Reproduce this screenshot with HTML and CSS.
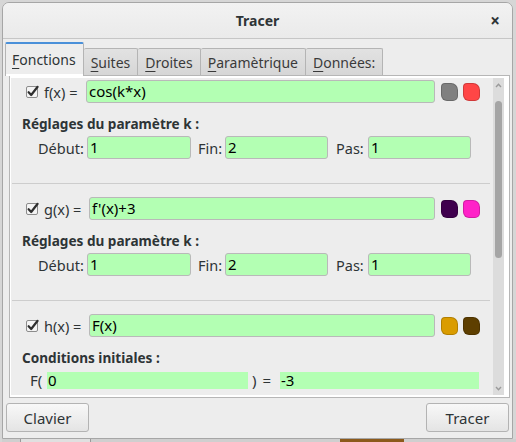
FILE: index.html
```html
<!DOCTYPE html>
<html lang="fr">
<head>
<meta charset="utf-8">
<title>Tracer</title>
<link rel="stylesheet" href="styles.css">
</head>
<body>
<div class="window">
  <div class="titlebar">
    <span></span>
    <span class="title">Tracer</span>
    <span class="close">×</span>
  </div>
  <div class="notebook">
    <div class="tabs">
      <div class="tab active"><u>F</u>onctions</div>
      <div class="tab"><u>S</u>uites</div>
      <div class="tab"><u>D</u>roites</div>
      <div class="tab"><u>P</u>aramètrique</div>
      <div class="tab"><u>D</u>onnées:</div>
    </div>
    <div class="page">
      <div class="viewport">
        <div class="list">
          <div class="rows">
            <div class="item">
              <div class="fline">
                <svg class="check" width="14" height="14" viewBox="0 0 14 14"><rect x="0.5" y="1.5" width="11" height="11" rx="1.5" fill="#f4f4f4" stroke="#8c8c8c"/><path d="M2.6 7.2 L5.2 10 L11.6 1.8" fill="none" stroke="#2e2e2e" stroke-width="2.2" stroke-linecap="round" stroke-linejoin="round"/></svg>
                <span class="fname narrow">f(x) =</span>
                <span class="entry grow">cos(k*x)</span>
                <span class="swatch" style="background:#808080"></span>
                <span class="swatch" style="background:#ff4646"></span>
              </div>
              <div class="section">Réglages du paramètre k :</div>
              <div class="params">
                <span class="plabel">Début:</span><span class="entry">1</span>
                <span class="plabel">Fin:</span><span class="entry">2</span>
                <span class="plabel">Pas:</span><span class="entry">1</span>
              </div>
            </div>
            <div class="sep"></div>
            <div class="item">
              <div class="fline">
                <svg class="check" width="14" height="14" viewBox="0 0 14 14"><rect x="0.5" y="1.5" width="11" height="11" rx="1.5" fill="#f4f4f4" stroke="#8c8c8c"/><path d="M2.6 7.2 L5.2 10 L11.6 1.8" fill="none" stroke="#2e2e2e" stroke-width="2.2" stroke-linecap="round" stroke-linejoin="round"/></svg>
                <span class="fname">g(x) =</span>
                <span class="entry grow">f'(x)+3</span>
                <span class="swatch" style="background:#40004e"></span>
                <span class="swatch" style="background:#ff22c8"></span>
              </div>
              <div class="section">Réglages du paramètre k :</div>
              <div class="params">
                <span class="plabel">Début:</span><span class="entry">1</span>
                <span class="plabel">Fin:</span><span class="entry">2</span>
                <span class="plabel">Pas:</span><span class="entry">1</span>
              </div>
            </div>
            <div class="sep"></div>
            <div class="item">
              <div class="fline">
                <svg class="check" width="14" height="14" viewBox="0 0 14 14"><rect x="0.5" y="1.5" width="11" height="11" rx="1.5" fill="#f4f4f4" stroke="#8c8c8c"/><path d="M2.6 7.2 L5.2 10 L11.6 1.8" fill="none" stroke="#2e2e2e" stroke-width="2.2" stroke-linecap="round" stroke-linejoin="round"/></svg>
                <span class="fname">h(x) =</span>
                <span class="entry grow">F(x)</span>
                <span class="swatch" style="background:#da9c00"></span>
                <span class="swatch" style="background:#5e3f00"></span>
              </div>
              <div class="section">Conditions initiales :</div>
              <div class="cond">
                <span class="clabel">F(</span>
                <span class="flat">0</span>
                <span class="cmid"><span>)</span><span class="eq">=</span></span>
                <span class="flat">-3</span>
              </div>
            </div>
          </div>
        </div>
        <div class="scrollbar">
          <svg class="arrow up" width="7" height="5" viewBox="0 0 7 5"><path d="M1 4 L3.5 1.3 L6 4" fill="none" stroke="#9a9a9a" stroke-width="1.4"/></svg>
          <div class="slider"></div>
          <div class="spacer"></div>
          <svg class="arrow down" width="7" height="5" viewBox="0 0 7 5"><path d="M1 1 L3.5 3.7 L6 1" fill="none" stroke="#9a9a9a" stroke-width="1.4"/></svg>
        </div>
      </div>
    </div>
  </div>
  <div class="actions">
    <button class="btn">Clavier</button>
    <button class="btn">Tracer</button>
  </div>
</div>
<div class="desk">
  <span class="desk-box"></span>
  <span class="desk-brown"></span>
</div>
</body>
</html>
```

FILE: styles.css
```css
* { box-sizing: border-box; }
html, body { margin: 0; height: 442px; overflow: hidden; }
body {
  background: #d6d6d6;
  padding: 2px 0 0 2px;
  font-family: "Noto Sans", "DejaVu Sans", sans-serif;
  font-size: 14px;
  color: #2e3436;
}
.window {
  width: 511px;
  height: 437px;
  border: 1px solid #a6a6a6;
  border-radius: 7px 7px 0 0;
  background: #ededed;
  display: flex;
  flex-direction: column;
}
.titlebar {
  height: 36px;
  flex: none;
  border-bottom: 1px solid #c6c6c6;
  border-radius: 6px 6px 0 0;
  background: linear-gradient(#f2f2f2, #eaeaea);
  display: grid;
  grid-template-columns: 1fr auto 1fr;
  align-items: center;
}
.title { font-weight: bold; font-size: 14px; color: #2e3436; }
.close {
  justify-self: end;
  margin-right: 12px;
  font-weight: bold;
  font-size: 17px;
  color: #2e3436;
  line-height: 1;
}
.notebook { padding: 3px 0 0 2px; flex: none; }
.tabs { display: flex; align-items: flex-end; height: 33px; }
.tab {
  height: 27px;
  padding: 0 7px;
  border: 1px solid #b4b4b4;
  border-left: none;
  border-bottom: none;
  border-radius: 2px 2px 0 0;
  background: linear-gradient(#e2e2e2, #d6d6d6);
  display: flex;
  align-items: center;
  font-size: 14px;
  color: #3a3a3a;
}
.tab u { text-decoration-thickness: 1px; text-underline-offset: 3px; }
.tab.active {
  height: 34px;
  margin-bottom: -1px;
  position: relative;
  z-index: 1;
  border-left: 1px solid #b4b4b4;
  border-top: 2px solid #4a90d9;
  background: linear-gradient(#ededed calc(100% - 2px), #ffffff 0);
  padding: 0 7px 1px 6px;
  color: #2e3436;
}
.page {
  margin-left: 4px;
  width: 501px;
  height: 323px;
  border: 1px solid #b6b6b6;
  background: #ffffff;
  padding: 2px 5px 2px 1px;
}
.viewport {
  display: flex;
  height: 317px;
  background: #ededed;
  overflow: hidden;
}
.list { width: 482px; overflow: hidden; }
.rows { margin-top: -11px; }
.item { padding: 13px 0 24px 0; }
.fline {
  display: flex;
  align-items: center;
  height: 23px;
  padding: 0 13px 0 15px;
}
.check { margin-right: 4px; flex: none; }
.fname {
  flex: none;
  width: 40px;
  margin-right: 5px;
  font-size: 14.5px;
  white-space: nowrap;
  color: #2e3436;
}
.fname.narrow { width: 37px; }
.entry {
  height: 23px;
  border: 1px solid #b9b9b9;
  border-radius: 3px;
  background: #b3ffb3;
  color: #000;
  font-size: 15px;
  line-height: 21px;
  padding-left: 2px;
  white-space: nowrap;
  overflow: hidden;
}
.grow { flex: 1; min-width: 0; }
.swatch {
  width: 17px;
  height: 18px;
  margin-left: 6px;
  flex: none;
  border: 1px solid rgba(0, 0, 0, 0.18);
  border-radius: 4px 7px 5px 6px;
}
.swatch + .swatch { margin-left: 5px; }
.section {
  margin: 12px 0 3px 0;
  padding-left: 11px;
  height: 18px;
  line-height: 18px;
  font-weight: bold;
  font-size: 13.6px;
  color: #2e3436;
}
.params {
  display: grid;
  grid-template-columns: 49px 104px 34px 103px 40px 103px;
  align-items: center;
  padding-left: 27px;
  height: 23px;
}
.plabel { font-size: 14.5px; color: #2e3436; }
.plabel:nth-child(3) { padding-left: 7px; }
.plabel:nth-child(5) { padding-left: 8px; }
.cond {
  display: grid;
  grid-template-columns: 17px 201px 32px 199px;
  align-items: center;
  padding-left: 19px;
  height: 18px;
  font-size: 15px;
}
.flat {
  height: 17px;
  background: #b3ffb3;
  color: #000;
  line-height: 17px;
  padding-left: 1px;
}
.cmid { display: flex; padding-left: 4px; }
.eq { margin-left: 6px; }
.sep { height: 1px; margin: 0 3px 0 1px; background: #cdcdcd; }
.scrollbar {
  width: 11px;
  background: #dcdcdc;
  display: flex;
  flex-direction: column;
  align-items: center;
  padding: 5px 0 4px 0;
}
.arrow { flex: none; }
.slider {
  margin-top: 13px;
  width: 7px;
  height: 157px;
  border-radius: 4px;
  background: #a5a5a5;
}
.spacer { flex: 1; }
.actions {
  display: flex;
  justify-content: space-between;
  padding: 5px 3px 0 3px;
}
.btn {
  width: 83px;
  height: 29px;
  border: 1px solid #b3b3b3;
  border-radius: 3px;
  background: linear-gradient(#f8f8f8, #e4e4e4);
  font-family: "Noto Sans", "DejaVu Sans", sans-serif;
  font-size: 15px;
  color: #2e3436;
  padding: 0;
}
.desk { display: flex; height: 3px; background: #cfcfcf; }
.desk-box { width: 71px; margin-left: 18px; border-left: 1px solid #9a9a9a; border-right: 1px solid #9a9a9a; background: #e0e0e0; }
.desk-brown { width: 64px; margin-left: 249px; background: #8c5a1c; }
```
